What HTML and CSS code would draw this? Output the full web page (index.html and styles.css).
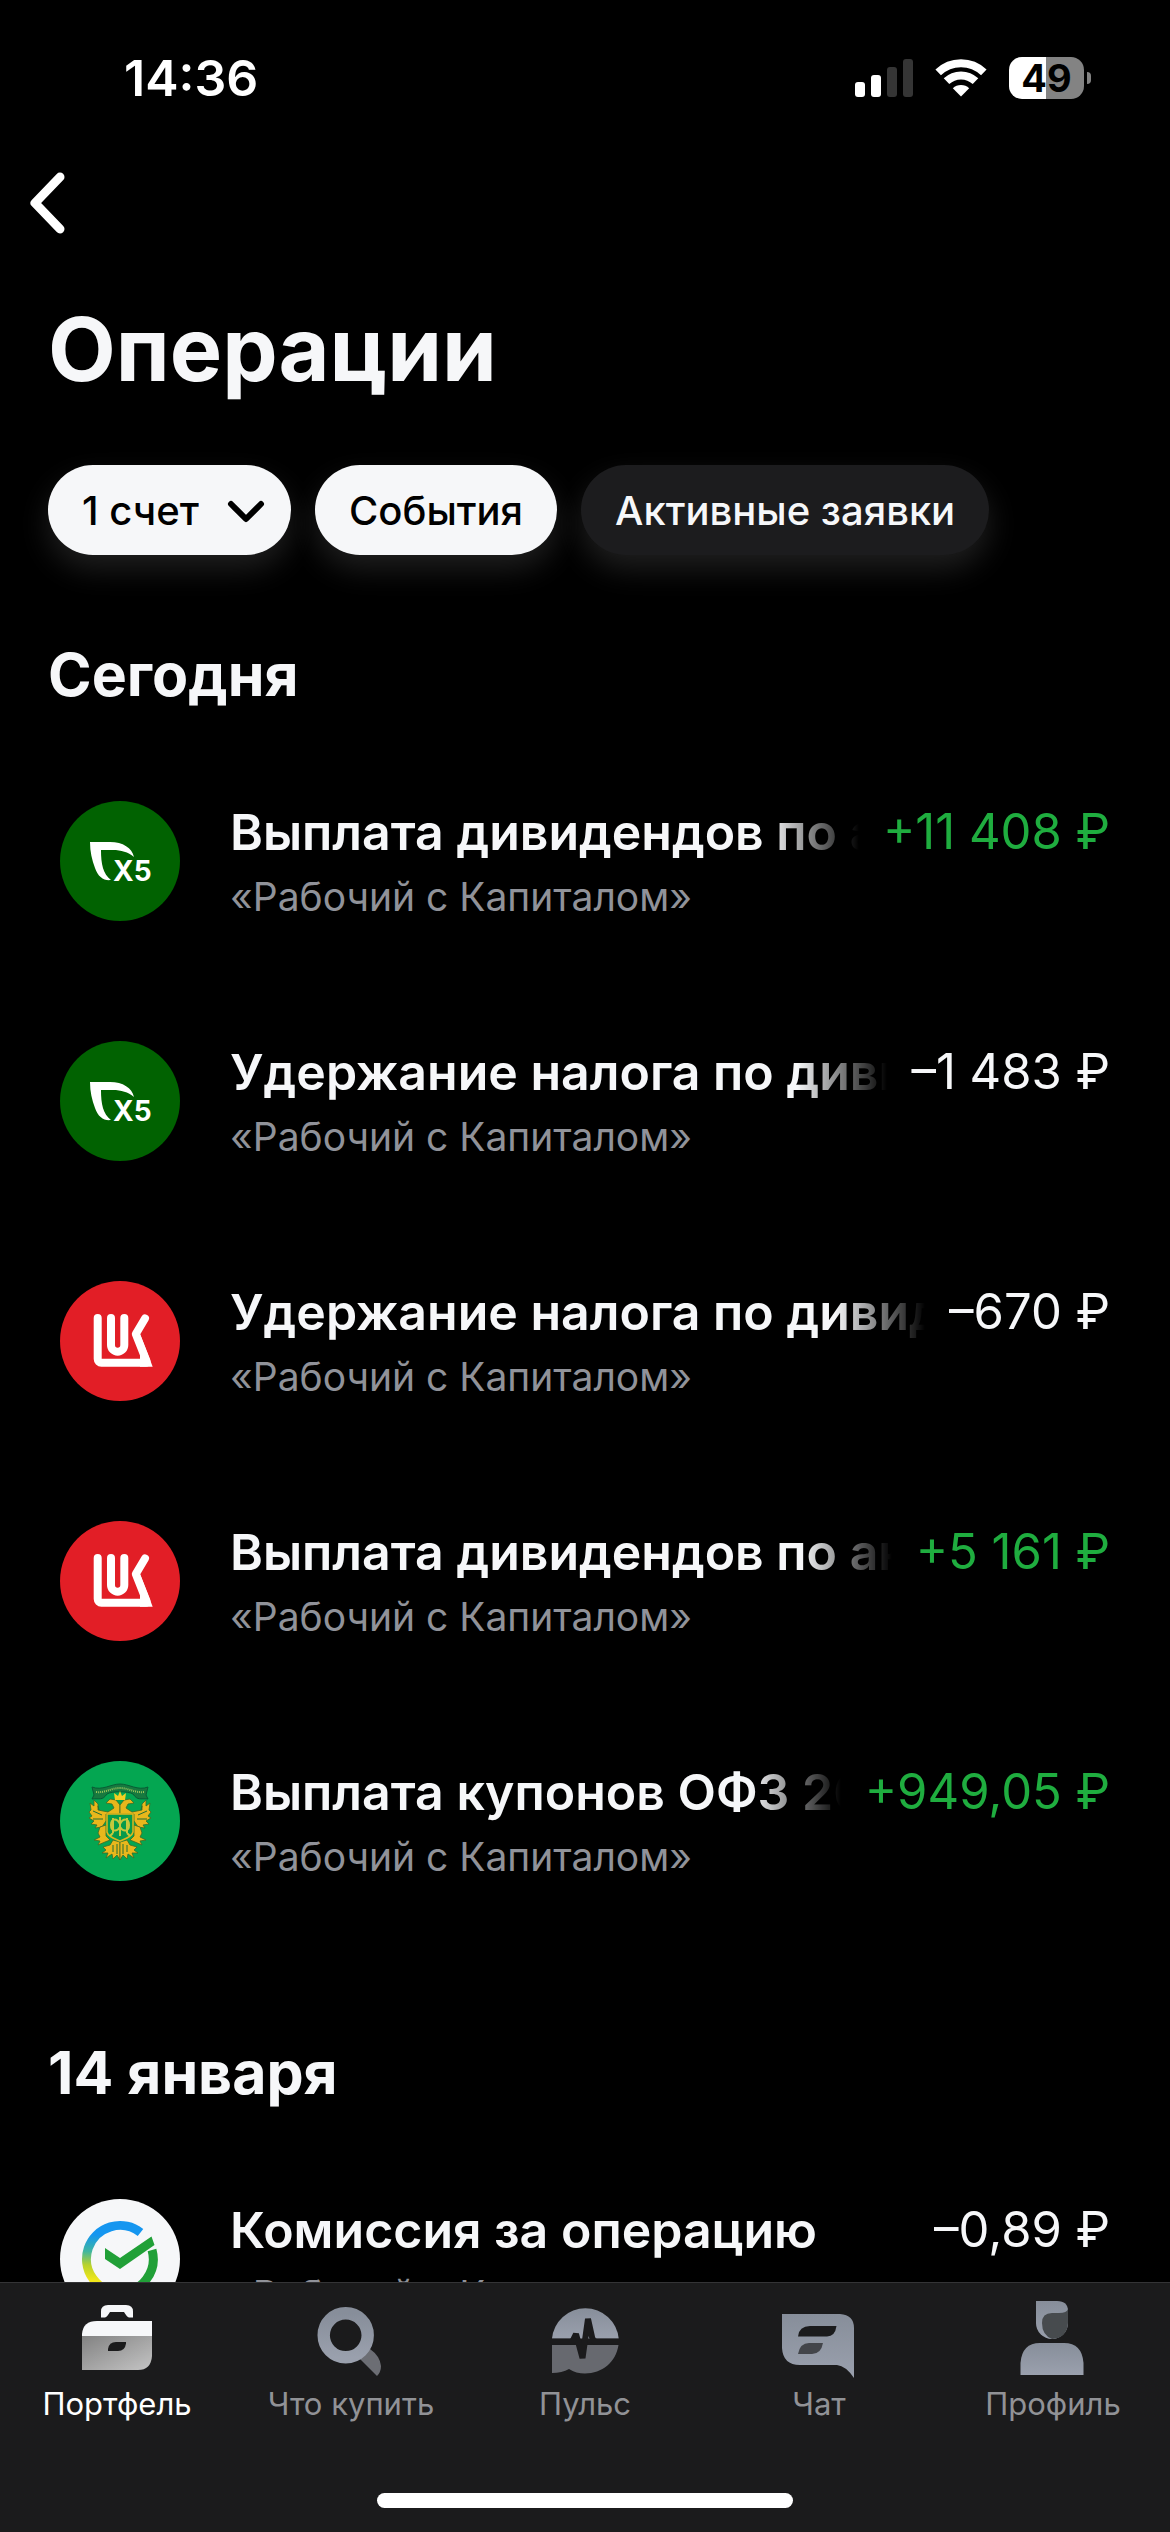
FILE: index.html
```html
<!doctype html>
<html lang="ru">
    <head>
        <meta charset="UTF-8" />
        <meta name="viewport" content="width=device-width, initial-scale=1" />

        <link rel="stylesheet" href="styles.css">

        <title>Операции</title>
    </head>
    <body>
        <!-- Shared logos, used by several rows -->
        <svg class="defs" aria-hidden="true">
            <defs>
                <linearGradient id="grey" x1="0" y1="0" x2="0" y2="1">
                    <stop offset="0" stop-color="#878e9a" />
                    <stop offset="1" stop-color="#9aa0ad" />
                </linearGradient>
                <linearGradient id="case" x1="0" y1="0" x2="1" y2="1">
                    <stop offset="0" stop-color="#828282" />
                    <stop offset="1" stop-color="#c4c4c4" />
                </linearGradient>
                <linearGradient id="ring" gradientUnits="userSpaceOnUse" x1="60" y1="22" x2="56" y2="98">
                    <stop offset="0.2" stop-color="#1596f0" />
                    <stop offset="0.42" stop-color="#3fb6a0" />
                    <stop offset="0.6" stop-color="#b8d22c" />
                    <stop offset="0.8" stop-color="#f2e71a" />
                </linearGradient>
                <symbol id="x5" viewBox="0 0 120 120">
                    <circle cx="60" cy="60" r="60" fill="#016201" />
                    <path fill="#fff" d="M30 41H50C63 41 72 47 74 56C68 51 61 49 53 49H41C41 63 43 73 51 79C44 80 38 76 35 67C32 59 30 51 30 41Z" />
                    <text x="53" y="80" fill="#fff" font-size="28" font-weight="700">X5</text>
                </symbol>
                <symbol id="luk" viewBox="0 0 120 120">
                    <circle cx="60" cy="60" r="60" fill="#e21e26" />
                    <g fill="none" stroke="#fff" stroke-width="8" stroke-linecap="round">
                        <path d="M51 37V64a6.6 6.6 0 0 0 13.3 0V37" />
                        <path d="M37.7 37V78a3.7 3.7 0 0 0 3.7 3.7H86" />
                        <path d="M85 37.500L75.800 53L86.500 80" stroke-linejoin="round" />
                    </g>
                    <path fill="#fff" d="M80 53L92.700 85.700H80Z" />
                </symbol>
                <symbol id="minfin" viewBox="0 0 120 120">
                    <circle cx="60" cy="60" r="60" fill="#04a651" />
                    <path fill="#17793f" stroke="#075c35" d="M32 26C42 30 51 23 60 23S78 30 88 26L86 34L88 38C80 37 78 40 73 33C68 30 52 30 47 33C42 40 40 37 32 38L34 34Z" />
                    <path fill="none" stroke="#9cc35a" stroke-width="2" stroke-dasharray="1 1" d="M36 31C46 32 51 27 60 27S74 32 84 31" />
                    <g id="eagle-half" fill="#e9b71c" stroke="#3c6a26" stroke-width="0.8">
                        <path d="M60 49V44L56 39L50 38L46 42L52 43L54 47L48 51L38 49L38 43L34 39V45L30 42L31 49L29 51L32 55L29 57L34 60L31 63L37 64L35 67L42 66L46 60L46 53H60Z" />
                        <path d="M46 64L40 66L38 72L40 76L34 79L40 80L38 84L45 81L50 79L46 75Z" />
                        <path d="M60 81L53 79L50 84L43 86L46 89L42 92L48 92L46 97L52 93L53 98L57 94L60 99Z" />
                    </g>
                    <use href="#eagle-half" transform="matrix(-1 0 0 1 120 0)" />
                    <path fill="#f3cf23" d="M55 39L54 32L58 35L60 30L62 35L66 32L65 39Z" />
                    <path fill="#059a4b" stroke="#e0b51d" stroke-width="1.500" d="M47 53H73V71C72 76 65 78 60 80C55 78 48 76 47 71Z" />
                    <path fill="none" stroke="#c4c83c" stroke-width="2" d="M60 56V75M53 57V72M67 57V72M51 64C51 57 57 57 60 63C63 57 69 57 69 64C69 71 63 71 60 66C57 71 51 71 51 64M53 72L50 75M67 72L70 75" />
                    <path fill="none" stroke="#246e33" stroke-width="1" d="M33 50L42 54M33 58L43 58M87 50L78 54M87 58L77 58M53 84V91M57 83V93M63 83V93M67 84V91M38 45L39 49M82 45L81 49" />
                </symbol>
                <symbol id="sber" viewBox="0 0 120 120">
                    <circle cx="60" cy="60" r="60" fill="#f6f7f9" />
                    <g fill="none" stroke-width="9">
                        <path stroke="#21a038" d="M92 51A33.500 33.500 0 0 1 60 93.500" />
                        <path stroke="url(#ring)" d="M80.500 33.500A33.500 33.500 0 1 0 60 93.500" />
                    </g>
                    <path fill="#21a038" d="M45 49L60 59L91.500 37.500L94.500 46L60 70L45 60Z" />
                </symbol>
            </defs>
        </svg>

        <header class="status-bar">
            <time>14:36</time>
            <div class="status-icons">
                <svg width="58" height="38" viewBox="0 0 58 38" fill="#fff" aria-hidden="true">
                    <rect y="23" width="10" height="15" rx="3" />
                    <rect x="16" y="16" width="10" height="22" rx="3" />
                    <rect x="32" y="8" width="10" height="30" rx="3" fill="#353535" />
                    <rect x="48" width="10" height="38" rx="3" fill="#353535" />
                </svg>
                <svg width="52" height="38" viewBox="0 0 52 38" fill="none" stroke="#fff" stroke-width="8" aria-hidden="true">
                    <path d="M3.200 13.400A33 33 0 0 1 48.800 13.400" />
                    <path d="M11.500 22.200A21 21 0 0 1 40.500 22.200" />
                    <path fill="#fff" stroke="none" d="M17.800 29.200A12 12 0 0 1 34.200 29.200L26 37.500Z" />
                </svg>
                <div class="battery">49</div>
            </div>
        </header>

        <main>
            <button class="back" aria-label="Назад">
                <svg width="44" height="68" viewBox="0 0 44 68" aria-hidden="true">
                    <path d="M34 8L9 34L34 60" fill="none" stroke="#fff" stroke-width="9" stroke-linecap="round" stroke-linejoin="round" />
                </svg>
            </button>

            <h1>Операции</h1>

            <div class="filters">
                <div class="account">
                    <select class="chip" aria-label="Счет">
                        <option>1 счет</option>
                    </select>
                    <svg width="40" height="26" viewBox="0 0 40 26" aria-hidden="true">
                        <path d="M5 5L20 20L35 5" fill="none" stroke="#000" stroke-width="6" stroke-linecap="round" stroke-linejoin="round" />
                    </svg>
                </div>
                <button class="chip">События</button>
                <button class="chip chip-dark">Активные заявки</button>
            </div>

            <section>
                <h2>Сегодня</h2>
                <ul class="operations">
                    <li>
                        <svg class="logo" aria-hidden="true"><use href="#x5" /></svg>
                        <div class="info">
                            <div class="line">
                                <span class="name">Выплата дивидендов по акциям</span>
                                <span class="sum income">+11 408 ₽</span>
                            </div>
                            <p>«Рабочий с Капиталом»</p>
                        </div>
                    </li>
                    <li>
                        <svg class="logo" aria-hidden="true"><use href="#x5" /></svg>
                        <div class="info">
                            <div class="line">
                                <span class="name">Удержание налога по дивидендам</span>
                                <span class="sum">–1 483 ₽</span>
                            </div>
                            <p>«Рабочий с Капиталом»</p>
                        </div>
                    </li>
                    <li>
                        <svg class="logo" aria-hidden="true"><use href="#luk" /></svg>
                        <div class="info">
                            <div class="line">
                                <span class="name">Удержание налога по дивидендам</span>
                                <span class="sum">–670 ₽</span>
                            </div>
                            <p>«Рабочий с Капиталом»</p>
                        </div>
                    </li>
                    <li>
                        <svg class="logo" aria-hidden="true"><use href="#luk" /></svg>
                        <div class="info">
                            <div class="line">
                                <span class="name">Выплата дивидендов по акциям</span>
                                <span class="sum income">+5 161 ₽</span>
                            </div>
                            <p>«Рабочий с Капиталом»</p>
                        </div>
                    </li>
                    <li>
                        <svg class="logo" aria-hidden="true"><use href="#minfin" /></svg>
                        <div class="info">
                            <div class="line">
                                <span class="name">Выплата купонов ОФЗ 26</span>
                                <span class="sum income">+949,05 ₽</span>
                            </div>
                            <p>«Рабочий с Капиталом»</p>
                        </div>
                    </li>
                </ul>
            </section>

            <section>
                <h2>14 января</h2>
                <ul class="operations">
                    <li>
                        <svg class="logo" aria-hidden="true"><use href="#sber" /></svg>
                        <div class="info">
                            <div class="line">
                                <span class="name">Комиссия за операцию</span>
                                <span class="sum">–0,89 ₽</span>
                            </div>
                            <p>«Рабочий с Капиталом»</p>
                        </div>
                    </li>
                </ul>
            </section>
        </main>

        <nav>
            <div class="tabs">
                <a href="#portfolio" class="active" aria-current="page">
                    <svg viewBox="0 0 84 84" aria-hidden="true">
                        <path fill="#f6f7f9" d="M26 20.500V14.500Q26 8 33 8H51Q58 8 58 14.500V20.500H54Q52 20 49 15H35Q32 20 30 20.500Z" />
                        <path fill="#f6f7f9" d="M7 39V37Q8 24 22 24H77V39Z" />
                        <path fill="url(#case)" d="M7 39H77V59Q76 73 63 73H7Z" />
                        <path fill="#1b1b1c" d="M33 54V52Q34 45 41 45H51V46.500Q50 54 43 54Z" />
                    </svg>
                    <span>Портфель</span>
                </a>
                <a href="#buy">
                    <svg viewBox="0 0 84 84" aria-hidden="true">
                        <path fill="#6c6e74" d="M61 52Q71 59 72 69Q72 75 68 79L50 61Z" />
                        <circle cx="36.700" cy="38.300" r="22" fill="#1b1b1c" stroke="url(#grey)" stroke-width="12.400" />
                    </svg>
                    <span>Что купить</span>
                </a>
                <a href="#pulse">
                    <svg viewBox="0 0 84 84" aria-hidden="true">
                        <path fill="url(#grey)" d="M9 41.500A33.500 33.500 0 0 1 75.700 41.500Z" />
                        <path fill="#67696f" d="M9 48H75.500C73 65 59 76.500 42 76.500Q33 76.500 26 72Q19 76 9 76Z" />
                        <path fill="none" stroke="#1b1b1c" stroke-width="6" stroke-linejoin="bevel" d="M8 44.700H27Q30 44.700 31 41L33 37L39.500 61L45 22L49 40Q50 44.700 54 44.700H76" />
                    </svg>
                    <span>Пульс</span>
                </a>
                <a href="#chat">
                    <svg viewBox="0 0 84 84" aria-hidden="true">
                        <path fill="url(#grey)" d="M5 17H63Q77 18 77 31V81Q69 69 60 68H23Q6 68 5 51Z" />
                        <path fill="#1b1b1c" d="M21 39.500Q22 29 33 29H59.500Q58 39.500 50 39.500Z" />
                        <path fill="#43454a" d="M21 57Q23 46 32 46H46Q44 57 35 57Z" />
                    </svg>
                    <span>Чат</span>
                </a>
                <a href="#profile">
                    <svg viewBox="0 0 84 84" aria-hidden="true">
                        <path fill="url(#grey)" d="M25 4H46Q57 4 57 14V26A16 16 0 0 1 25 26Z" />
                        <path fill="#474b4e" d="M57 12V26Q56 41 41 42Q31 38 31 26Q31 16 41 16H48Q56 16 57 12Z" />
                        <path fill="url(#grey)" d="M9.500 78V66Q11 46 29 46H53Q71 46 72.500 66V78Z" />
                    </svg>
                    <span>Профиль</span>
                </a>
            </div>
            <div class="home-bar"></div>
        </nav>
    </body>
</html>
```
FILE: styles.css
```css
* {
    box-sizing: border-box;
}
body {
    margin: 0;
    height: 100vh;
    display: flex;
    flex-direction: column;
    overflow: hidden;
    font-family: Inter, "Liberation Sans", sans-serif;
    background: #000;
    color: #f6f7f9;
}
h1,
h2,
p,
ul {
    margin: 0;
    padding: 0;
}
svg {
    display: block;
    flex: none;
}
button,
select {
    font: inherit;
    border: none;
    margin: 0;
}
.defs {
    position: absolute;
    width: 0;
    height: 0;
}

/* --  STATUS BAR -- */

.status-bar {
    flex: none;
    display: flex;
    justify-content: space-between;
    align-items: center;
    height: 156px;
    padding: 0 80px 0 124px;
    color: #fff;
}
.status-bar time {
    font-size: 50px;
    font-weight: 600;
}
.status-icons {
    display: flex;
    align-items: center;
    gap: 22px;
}
.battery {
    position: relative;
    width: 75px;
    height: 42px;
    margin-right: 6px;
    border-radius: 13px;
    background: linear-gradient(90deg, #fff 49%, #838383 49%);
    color: #000;
    font-size: 38px;
    font-weight: 700;
    line-height: 42px;
    text-align: center;
}
.battery::after {
    content: "";
    position: absolute;
    right: -7px;
    top: 15px;
    width: 4px;
    height: 12px;
    border-radius: 0 6px 6px 0;
    background: #838383;
}

/* --  OPERATIONS -- */

main {
    flex: 1;
    min-height: 0;
    overflow: hidden;
}
.back {
    display: block;
    margin: 13px 0 0 26px;
    padding: 0;
    background: none;
}
h1 {
    padding: 58px 48px 0;
    font-size: 88px;
    font-weight: 700;
    line-height: 108px;
}
.filters {
    display: flex;
    gap: 24px;
    padding: 62px 48px 0;
}
.chip {
    height: 90px;
    padding: 0 34px;
    border-radius: 45px;
    background: #f6f7f9;
    color: #000;
    font-size: 40px;
    font-weight: 500;
    white-space: nowrap;
    box-shadow: 0 14px 30px rgba(255, 255, 255, 0.12);
}
.chip-dark {
    background: #1c1c1e;
    color: #f6f7f9;
}
.account {
    position: relative;
}
.account select {
    appearance: none;
    padding-right: 92px;
}
.account svg {
    position: absolute;
    right: 25px;
    top: 34px;
    pointer-events: none;
}
h2 {
    padding: 84px 48px 0;
    font-size: 59px;
    font-weight: 700;
    line-height: 72px;
}
.operations {
    padding: 90px 60px 72px;
    list-style: none;
    display: grid;
    grid-template-columns: minmax(0, 1fr);
    gap: 120px;
}
.operations li {
    display: flex;
    gap: 50px;
    height: 120px;
}
.logo {
    width: 120px;
    height: 120px;
}
.info {
    flex: 1;
    min-width: 0;
}
.line {
    display: flex;
    gap: 24px;
    font-size: 50px;
    line-height: 62px;
    white-space: nowrap;
}
.name {
    flex: 1;
    min-width: 0;
    overflow: hidden;
    font-weight: 600;
    -webkit-mask-image: linear-gradient(270deg, transparent, #000 90px);
    mask-image: linear-gradient(270deg, transparent, #000 90px);
}
.sum {
    font-size: 49px;
}
.income {
    color: #1fad3f;
}
.info p {
    padding-top: 11px;
    color: #909299;
    font-size: 39px;
    line-height: 46px;
}

/* --  BOTTOM NAV -- */

nav {
    flex: none;
    height: 250px;
    padding-top: 14px;
    border-top: 1px solid #343436;
    background: #1b1b1c;
}
.tabs {
    display: grid;
    grid-template-columns: repeat(5, 1fr);
}
.tabs a {
    display: flex;
    flex-direction: column;
    align-items: center;
    gap: 5px;
    color: #919296;
    font-size: 31px;
    line-height: 36px;
    text-decoration: none;
}
.tabs svg {
    width: 84px;
    height: 84px;
}
.tabs .active {
    color: #fff;
}
.home-bar {
    width: 416px;
    height: 15px;
    margin: 71px auto 0;
    border-radius: 8px;
    background: #fff;
}
```
